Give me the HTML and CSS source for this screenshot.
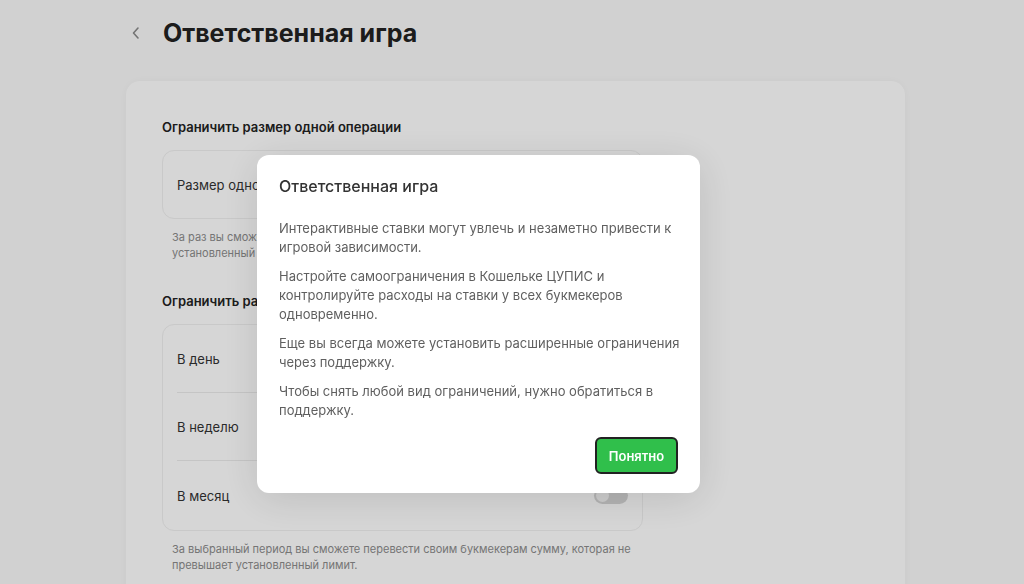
FILE: index.html
```html
<!DOCTYPE html>
<html lang="ru">
<head>
    <meta charset="UTF-8">
    <meta name="viewport" content="width=device-width, initial-scale=1.0">
    <title>Ответственная игра</title>
    <link rel="stylesheet" href="styles.css">
</head>
<body>

    <div class="page">
        <div class="header">
            <span class="back">
                <svg width="10" height="14" viewBox="0 0 10 14"><path d="M7 2 L2.5 7 L7 12" fill="none" stroke="#8a8a8a" stroke-width="1.6" stroke-linecap="round" stroke-linejoin="round"/></svg>
            </span>
            <h1>Ответственная игра</h1>
        </div>

        <div class="card">
            <div class="section">
                <h2>Ограничить размер одной операции</h2>
                <div class="box">
                    <div class="row">
                        <span>Размер одной операции</span>
                        <span class="toggle"></span>
                    </div>
                </div>
                <p class="hint">За раз вы сможете перевести своим букмекерам сумму, которая не превышает<br>установленный лимит.</p>
            </div>

            <div class="section">
                <h2>Ограничить размер переводов за период</h2>
                <div class="box">
                    <div class="row">
                        <span>В день</span>
                        <span class="toggle"></span>
                    </div>
                    <div class="row">
                        <span>В неделю</span>
                        <span class="toggle"></span>
                    </div>
                    <div class="row">
                        <span>В месяц</span>
                        <span class="toggle"></span>
                    </div>
                </div>
                <p class="hint">За выбранный период вы сможете перевести своим букмекерам сумму, которая не<br>превышает установленный лимит.</p>
            </div>
        </div>
    </div>

    <div class="overlay">
        <div class="modal">
            <h3>Ответственная игра</h3>
            <p>Интерактивные ставки могут увлечь и незаметно привести к игровой зависимости.</p>
            <p>Настройте самоограничения в Кошельке ЦУПИС и<br>контролируйте расходы на ставки у всех букмекеров одновременно.</p>
            <p>Еще вы всегда можете установить расширенные ограничения через поддержку.</p>
            <p>Чтобы снять любой вид ограничений, нужно обратиться в поддержку.</p>
            <div class="modal-actions">
                <button class="ok">Понятно</button>
            </div>
        </div>
    </div>

</body>
</html>
```

FILE: styles.css
```css
body {
    margin: 0;
    font-family: Inter, "Noto Sans", Arial, sans-serif;
    background-color: #fafafa;
    color: #222222;
    height: 584px;
    overflow: hidden;
}
.page {
    padding: 0 0 0 126px;
}
.header {
    display: flex;
    align-items: center;
    height: 66px;
}
.back {
    display: flex;
    width: 32px;
    padding-left: 5px;
}
h1 {
    margin: 0;
    font-size: 25px;
    font-weight: 700;
    color: #222222;
}
.card {
    width: 779px;
    margin-top: 15px;
    box-sizing: border-box;
    padding: 37px 36px;
    background-color: #ffffff;
    border-radius: 14px;
    box-shadow: 0 0 12px rgba(0, 0, 0, 0.04);
}
.section {
    width: 481px;
    margin-bottom: 31px;
}
h2 {
    margin: 0 0 14px;
    font-size: 13px;
    font-weight: 600;
    line-height: 18px;
}
.box {
    border: 1px solid #f0f0f0;
    border-radius: 12px;
    padding: 0 14px 0 14px;
}
.row {
    display: flex;
    align-items: center;
    justify-content: space-between;
    height: 67px;
    font-size: 13px;
    color: #333333;
}
.row + .row {
    border-top: 1px solid #ebebeb;
}
.row + .row:last-child {
    height: 69px;
}
.toggle {
    width: 34px;
    height: 17px;
    border-radius: 9px;
    background-color: #d6d6d6;
    position: relative;
}
.toggle::after {
    content: "";
    position: absolute;
    left: 2px;
    top: 2px;
    width: 13px;
    height: 13px;
    border-radius: 50%;
    background-color: #f4f4f4;
}
.hint {
    margin: 10px 0 0 10px;
    font-size: 11px;
    line-height: 16px;
    color: #8c8c8c;
    white-space: nowrap;
}
/* Затемнение и окно */
.overlay {
    position: fixed;
    inset: 0;
    background-color: rgba(0, 0, 0, 0.16);
}
.modal {
    width: 443px;
    box-sizing: border-box;
    margin: 155px 0 0 257px;
    padding: 20px 22px 19px;
    background-color: #ffffff;
    border-radius: 12px;
    box-shadow: 0 6px 40px rgba(0, 0, 0, 0.12);
}
.modal h3 {
    margin: 0 0 22px;
    font-size: 16px;
    font-weight: 500;
    line-height: 22px;
    color: #333333;
}
.modal p {
    margin: 0 -6px 10px 0;
    font-size: 13px;
    line-height: 19px;
    color: #5f5f5f;
}
.modal-actions {
    display: flex;
    justify-content: flex-end;
    margin-top: 17px;
}
.ok {
    width: 83px;
    height: 37px;
    font-family: inherit;
    font-size: 13px;
    font-weight: 600;
    color: #ffffff;
    background-color: #30bf4b;
    border: 2px solid #222222;
    border-radius: 6px;
    cursor: pointer;
}
```
